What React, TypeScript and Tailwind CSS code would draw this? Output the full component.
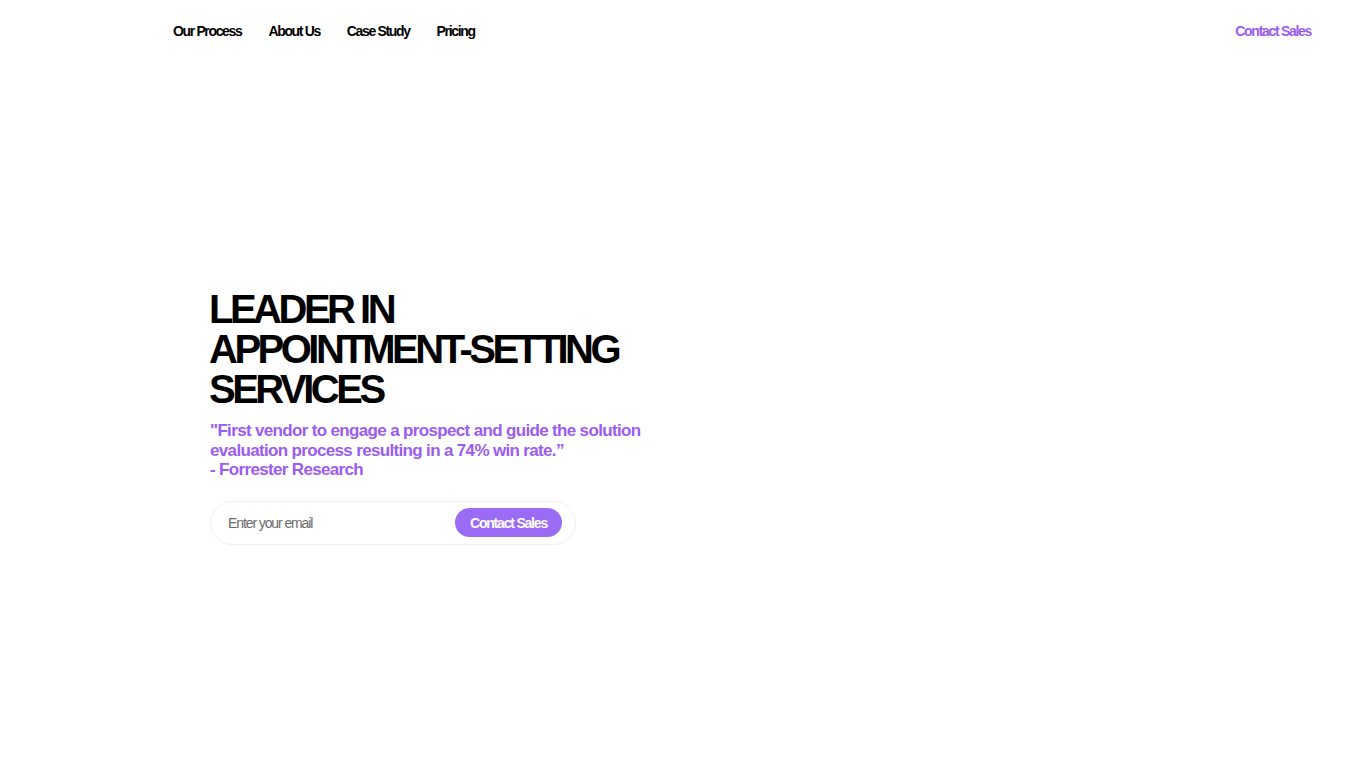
export default function App() {
  const links = ["Our Process", "About Us", "Case Study", "Pricing"];

  return (
    <div className="min-h-screen bg-white font-['Liberation_Sans',Arial,sans-serif]">
      <header className="flex h-[62px] items-center justify-between pl-[173px] pr-[55px]">
        <nav className="flex items-center gap-[27px]">
          {links.map((link) => (
            <a key={link} href="#" className="text-sm font-bold tracking-[-1.35px] text-black">
              {link}
            </a>
          ))}
        </nav>
        <a href="#" className="text-sm font-bold tracking-[-1.3px] text-[#9b5cf2]">
          Contact Sales
        </a>
      </header>

      <section className="pl-[209px] pt-[227px]">
        <h1 className="text-[40px] font-bold leading-[40px] tracking-[-3.5px] text-black">
          LEADER IN
          <br />
          APPOINTMENT-SETTING
          <br />
          SERVICES
        </h1>
        <p className="mt-[12px] pl-px text-[17px] font-bold leading-[19.5px] tracking-[-0.66px] text-[#9b5cf2]">
          "First vendor to engage a prospect and guide the solution
          <br />
          evaluation process resulting in a 74% win rate.”
          <br />- Forrester Research
        </p>

        <form className="mt-[21px] ml-px flex h-[44px] w-[366px] items-center justify-between rounded-full border border-[#f2f0f7] pl-[17px] pr-[13px]">
          <input
            type="email"
            placeholder="Enter your email"
            className="w-[200px] bg-transparent text-sm tracking-[-1.1px] text-gray-700 outline-none placeholder:text-[#6b6b6b]"
          />
          <button
            type="button"
            className="h-[29px] w-[107px] rounded-full bg-[#9a6bf5] text-sm font-bold tracking-[-1.2px] text-white"
          >
            Contact Sales
          </button>
        </form>
      </section>
    </div>
  );
}
